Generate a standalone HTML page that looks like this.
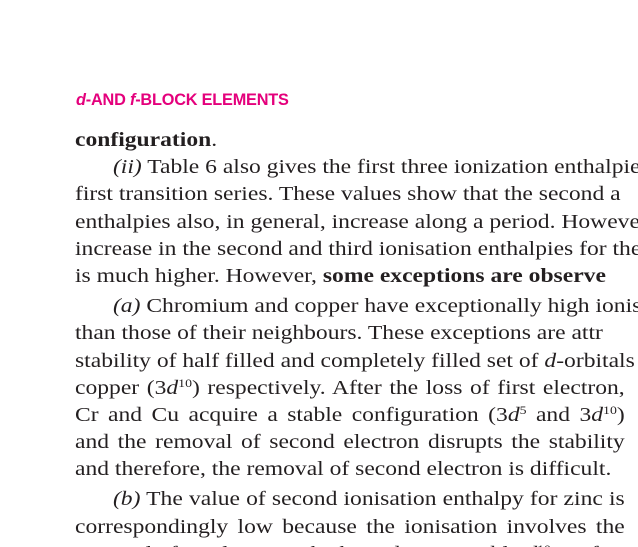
<!DOCTYPE html>
<html><head><meta charset="utf-8"><style>
html,body{margin:0;padding:0;background:#fff;width:638px;height:547px;overflow:hidden}
.h{position:absolute;left:76px;top:91px;font:bold 16.3px "Liberation Sans",sans-serif;color:#e4007c;letter-spacing:-0.2px}
.w{position:absolute;left:0;top:0;width:638px;height:547px;overflow:hidden}
.t{position:absolute;left:75px;top:127px;width:480px;font:20.5px/27.2px "Liberation Serif",serif;color:#231f20;transform:scaleX(1.15);transform-origin:0 0}
.l{white-space:nowrap;height:27.2px}
.n{width:478px;text-align:justify;text-align-last:justify;white-space:normal;height:27.2px;overflow:hidden}
.ind{padding-left:33px}
.p{margin-top:3px}
sup{font-size:12px;line-height:0;vertical-align:7px}
</style></head><body>
<div class="h"><i>d</i>-AND <i>f</i>-BLOCK ELEMENTS</div>
<div class="w">
<div class="t">
<div class="l"><b>configuration</b>.</div>
<div class="l ind"><i>(ii)</i> Table 6 also gives the first three ionization enthalpie</div>
<div class="l">first transition series. These values show that the second a</div>
<div class="l">enthalpies also, in general, increase along a period. Howeve</div>
<div class="l">increase in the second and third ionisation enthalpies for the s</div>
<div class="l">is much higher. However, <b>some exceptions are observe</b></div>
<div class="l ind p"><i>(a)</i> Chromium and copper have exceptionally high ionisat</div>
<div class="l">than those of their neighbours. These exceptions are attr</div>
<div class="l">stability of half filled and completely filled set of <i>d</i>-orbitals in</div>
<div class="n">copper (3<i>d</i><sup>10</sup>) respectively. After the loss of first electron,</div>
<div class="n">Cr and Cu acquire a stable configuration (3<i>d</i><sup>5</sup> and 3<i>d</i><sup>10</sup>)</div>
<div class="n">and the removal of second electron disrupts the stability</div>
<div class="l">and therefore, the removal of second electron is difficult.</div>
<div class="n ind p" style="width:445px"><i>(b)</i> The value of second ionisation enthalpy for zinc is</div>
<div class="n">correspondingly low because the ionisation involves the</div>
<div class="l">removal of an electron which produces a stable <i>d</i><sup>10</sup> configuration</div>
</div>
</div>
</body></html>
